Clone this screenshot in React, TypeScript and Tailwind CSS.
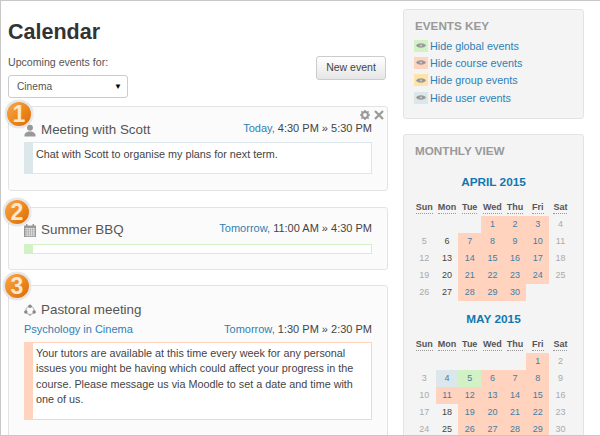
import { ReactNode } from 'react';

const sans = 'font-["Liberation_Sans",Arial,sans-serif]';

// Numbered orange marker that sits over the corner of a card
function Marker({ n, className }: { n: number; className: string }) {
  return (
    <div className={`absolute flex h-[28px] w-[28px] items-center justify-center rounded-full border-[2px] border-[#e6e6e6] bg-gradient-to-br from-[#f7a64a] via-[#ee8a1e] to-[#d96a08] text-[23px] font-bold leading-none text-[#fbe6cf] shadow-[0_0_1px_#aaa] ${className}`}>
      {n}
    </div>
  );
}

function PersonIcon() {
  return (
    <svg width="13" height="13" viewBox="0 0 13 13" fill="#999">
      <circle cx="6.5" cy="3.6" r="3.2" />
      <path d="M0.5 13V11.3C0.5 9.3 3 8.4 4.8 7.6H8.2C10 8.4 12.5 9.3 12.5 11.3V13Z" />
    </svg>
  );
}

function CalendarIcon() {
  return (
    <svg width="12" height="13" viewBox="0 0 12 13" fill="#999">
      <path d="M0 1.5H2V0H3.5V1.5H8.5V0H10V1.5H12V13H0Z" />
      <path
        d="M1 4.6H11M1 6.8H11M1 9H11M1 11.2H11M3.2 4V12.4M5.4 4V12.4M7.6 4V12.4M9.8 4V12.4"
        stroke="#e6e6e6"
        strokeWidth="0.8"
      />
    </svg>
  );
}

function GroupIcon() {
  return (
    <svg width="13" height="13" viewBox="0 0 13 13" fill="#888">
      <circle cx="6.5" cy="6.5" r="4.4" fill="none" stroke="#bbb" strokeWidth="1.4" />
      <circle cx="6.5" cy="2" r="1.9" />
      <circle cx="2" cy="8" r="1.9" />
      <circle cx="11" cy="8" r="1.9" />
      <circle cx="6.5" cy="11.2" r="1.2" fill="#aaa" />
    </svg>
  );
}

function GearIcon() {
  return (
    <svg width="10" height="10" viewBox="0 0 10 10">
      <circle cx="5" cy="5" r="2.9" fill="none" stroke="#999" strokeWidth="2" />
      <path
        d="M5 0V2M5 8V10M0 5H2M8 5H10M1.4 1.4L2.8 2.8M7.2 7.2L8.6 8.6M8.6 1.4L7.2 2.8M2.8 7.2L1.4 8.6"
        stroke="#999"
        strokeWidth="1.6"
      />
    </svg>
  );
}

function CloseIcon() {
  return (
    <svg width="10" height="10" viewBox="0 0 10 10">
      <path d="M1 1L9 9M9 1L1 9" stroke="#999" strokeWidth="2.2" />
    </svg>
  );
}

function EyeIcon() {
  return (
    <svg width="10" height="7" viewBox="0 0 10 7">
      <path d="M0 3.5C2 0.5 8 0.5 10 3.5C8 6.5 2 6.5 0 3.5Z" fill="#999" />
      <circle cx="5" cy="3.5" r="1.1" fill="#ccc" />
    </svg>
  );
}

function When({ day, time, className }: { day: string; time: string; className?: string }) {
  return (
    <div className={`text-[11px] text-[#444] ${className ?? ''}`}>
      <span className="text-[#2f7fb5]">{day},</span> {time}
    </div>
  );
}

function EventCard({
  n,
  markerClass,
  icon,
  title,
  time,
  day,
  course,
  tools,
  children,
  barBorder,
  barColor,
  barGap,
  className,
}: {
  n: number;
  markerClass: string;
  icon: ReactNode;
  title: string;
  day: string;
  time: string;
  course?: string;
  tools?: ReactNode;
  children?: ReactNode;
  barBorder: string;
  barColor: string;
  barGap: string;
  className: string;
}) {
  return (
    <div className={`relative rounded-[3px] border border-[#e3e3e3] bg-[#fbfbfb] px-[15px] ${className}`}>
      <Marker n={n} className={markerClass} />
      {tools}
      <div className="flex items-center justify-between">
        <div className="flex items-center gap-[5px] text-[13.4px] leading-[20px] text-[#555]">
          <span className="flex w-[12px] justify-center">{icon}</span>
          {title}
        </div>
        {!course && <When day={day} time={time} className="mb-[3px]" />}
      </div>
      {course && (
        <div className="mt-[2px] flex h-[14px] items-center justify-between text-[11px]">
          <span className="text-[#2f7fb5]">{course}</span>
          <When day={day} time={time} />
        </div>
      )}
      <div className={`flex border bg-white ${barGap} ${barBorder}`}>
        <div className={`w-[8px] shrink-0 ${barColor}`} />
        {children}
      </div>
    </div>
  );
}

function EventsKeyRow({ color, label }: { color: string; label: string }) {
  return (
    <div className="flex h-[17.33px] items-center gap-[2px] text-[10.8px] text-[#2f7fb5]">
      <span className={`flex h-[12px] w-[14px] items-center justify-center ${color}`}>
        <EyeIcon />
      </span>
      {label}
    </div>
  );
}

const DAYS = ['Sun', 'Mon', 'Tue', 'Wed', 'Thu', 'Fri', 'Sat'];

type Cell = { d: number; bg?: string };

function MonthTable({ title, lead, count, mark }: { title: string; lead: number; count: number; mark: (d: number) => string }) {
  const cells: (Cell | null)[] = [];
  for (let i = 0; i < lead; i++) cells.push(null);
  for (let d = 1; d <= count; d++) cells.push({ d, bg: mark(d) });

  return (
    <div className="w-[161px]">
      <div className="text-center text-[11.8px] font-bold leading-[16px] text-[#1177b0]">{title}</div>
      <div className="mt-[9px] grid grid-cols-[repeat(7,22.7px)] text-center text-[9px]">
        {DAYS.map((d) => (
          <div key={d} className="flex h-[17px] items-start justify-center pt-[3px] font-bold text-[#555]">
            <span className="border-b border-dotted border-[#999] leading-[11px]">{d}</span>
          </div>
        ))}
        {cells.map((c, i) => {
          if (!c) return <div key={i} className="h-[17px]" />;
          const weekend = i % 7 === 0 || i % 7 === 6;
          const color = c.bg ? 'text-[#3f7ea8]' : weekend ? 'text-[#aaa]' : 'text-[#444]';
          return (
            <div key={i} className={`flex h-[17px] items-center justify-center ${c.bg ?? ''} ${color}`}>
              {c.d}
            </div>
          );
        })}
      </div>
    </div>
  );
}

const COURSE = 'bg-[#ffd3bd]';

function aprilMark(d: number) {
  const weekday = (d + 2) % 7;
  return weekday >= 2 && weekday <= 5 ? COURSE : '';
}

function mayMark(d: number) {
  if (d === 4) return 'bg-[#dce7ec]';
  if (d === 5) return 'bg-[#d2f2c6]';
  if (d === 11) return COURSE;
  const weekday = (d + 4) % 7;
  return weekday >= 2 && weekday <= 5 ? COURSE : '';
}

export default function App() {
  return (
    <div className={`flex h-[436px] w-[600px] gap-[15px] overflow-hidden border-b border-l border-t border-[#c8c8c8] bg-white pl-[7px] ${sans}`}>
      <div className="w-[380px] shrink-0">
        <h1 className="mt-[19px] text-[21.5px] font-bold leading-[25px] text-[#333]">Calendar</h1>
        <div className="mt-[10px] flex items-start justify-between">
          <div>
            <div className="text-[10.6px] leading-[14px] text-[#555]">Upcoming events for:</div>
            <div className="mt-[6px] flex h-[23px] w-[120px] items-center justify-between rounded-[3px] border border-[#ccc] bg-white pl-[8px] pr-[5px] text-[10.2px] text-[#555]">
              Cinema
              <span className="text-[8px] text-black">▼</span>
            </div>
          </div>
          <div className="mr-[2px] mt-[1px] flex h-[24px] w-[70px] items-center justify-center rounded-[3px] border border-[#ccc] bg-gradient-to-b from-white to-[#e6e6e6] text-[10.5px] text-[#444]">
            New event
          </div>
        </div>

        <EventCard
          n={1}
          markerClass="-left-[4px] -top-[7px]"
          icon={<PersonIcon />}
          title="Meeting with Scott"
          day="Today"
          time="4:30 PM » 5:30 PM"
          tools={
            <div className="absolute right-[3px] top-[3px] flex items-center gap-[4px]">
              <GearIcon />
              <CloseIcon />
            </div>
          }
          barBorder="border-[#dce7ec]"
          barColor="bg-[#dce7ec]"
          barGap="mt-[2px]"
          className="mt-[8px] h-[85px] pt-[13px]"
        >
          <p className="h-[30px] px-[3px] pt-[4px] text-[10.8px] leading-[15.3px] text-[#444]">
            Chat with Scott to organise my plans for next term.
          </p>
        </EventCard>

        <EventCard
          n={2}
          markerClass="-left-[6px] -top-[10px]"
          icon={<CalendarIcon />}
          title="Summer BBQ"
          day="Tomorrow"
          time="11:00 AM » 4:30 PM"
          barBorder="border-[#d2f2c6]"
          barColor="bg-[#d2f2c6]"
          barGap="mt-[4px]"
          className="mt-[16px] h-[63px] pt-[12px]"
        >
          <div className="h-[8px]" />
        </EventCard>

        <EventCard
          n={3}
          markerClass="-left-[6px] -top-[14px]"
          icon={<GroupIcon />}
          title="Pastoral meeting"
          day="Tomorrow"
          time="1:30 PM » 2:30 PM"
          course="Psychology in Cinema"
          barBorder="border-[#ffd3bd]"
          barColor="bg-[#ffd3bd]"
          barGap="mt-[6px]"
          className="mt-[15px] h-[160px] pt-[14px]"
        >
          <p className="h-[76px] px-[3px] pt-[3px] text-[10.8px] leading-[15.3px] text-[#444]">
            Your tutors are available at this time every week for any personal issues you might be having which could affect your progress in the course. Please message us via Moodle to set a date and time with one of us.
          </p>
        </EventCard>
      </div>

      <div className="w-[181px] shrink-0 pt-[8px]">
        <div className="h-[110px] rounded-[3px] border border-[#e3e3e3] bg-[#f4f4f4] pl-[10px] pt-[9px]">
          <div className="mb-[4px] pl-[1px] text-[11.7px] font-bold leading-[14px] text-[#999]">EVENTS KEY</div>
          <EventsKeyRow color="bg-[#d2f2c6]" label="Hide global events" />
          <EventsKeyRow color="bg-[#ffd3bd]" label="Hide course events" />
          <EventsKeyRow color="bg-[#ffe3a8]" label="Hide group events" />
          <EventsKeyRow color="bg-[#dce7ec]" label="Hide user events" />
        </div>
        <div className="mt-[15px] h-[400px] rounded-[3px] border border-[#e3e3e3] bg-[#f4f4f4] pl-[9px] pt-[9px]">
          <div className="pl-[2px] text-[11.7px] font-bold leading-[14px] text-[#999]">MONTHLY VIEW</div>
          <div className="mt-[16px]">
            <MonthTable title="APRIL 2015" lead={3} count={30} mark={aprilMark} />
          </div>
          <div className="mt-[10px]">
            <MonthTable title="MAY 2015" lead={5} count={30} mark={mayMark} />
          </div>
        </div>
      </div>
    </div>
  );
}
